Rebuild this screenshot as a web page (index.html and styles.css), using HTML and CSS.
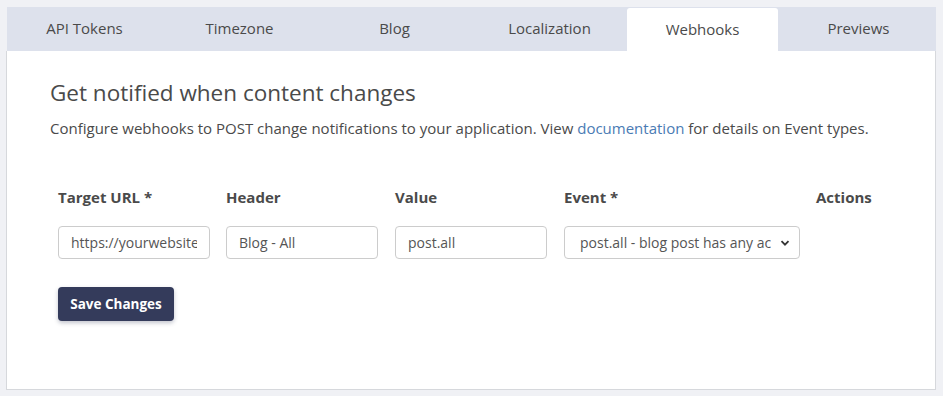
FILE: index.html
```html
<!DOCTYPE html>
<html lang="en">

<head>
    <meta charset="UTF-8">
    <meta name="viewport" content="width=device-width, initial-scale=1.0">
    <title>Settings - Webhooks</title>
    <link rel="stylesheet" href="styles.css">
</head>

<body>
    <div class="settings">
        <nav class="tabs">
            <a class="tab" href="#">API Tokens</a>
            <a class="tab" href="#">Timezone</a>
            <a class="tab" href="#">Blog</a>
            <a class="tab" href="#">Localization</a>
            <a class="tab active" href="#">Webhooks</a>
            <a class="tab" href="#">Previews</a>
        </nav>

        <div class="panel">
            <h2>Get notified when content changes</h2>
            <p class="intro">Configure webhooks to POST change notifications to your application. View <a href="#">documentation</a> for details on Event types.</p>

            <form id="webhookForm">
                <table class="hooks">
                    <thead>
                        <tr>
                            <th class="col-url">Target URL *</th>
                            <th class="col-header">Header</th>
                            <th class="col-value">Value</th>
                            <th class="col-event">Event *</th>
                            <th>Actions</th>
                        </tr>
                    </thead>
                    <tbody>
                        <tr>
                            <td><input type="text" name="url" value="https://yourwebsite.com/webhook"></td>
                            <td><input type="text" name="header" value="Blog - All"></td>
                            <td><input type="text" name="value" value="post.all"></td>
                            <td>
                                <div class="select-wrap">
                                    <select name="event">
                                        <option>post.all - blog post has any action</option>
                                    </select>
                                    <svg class="chevron" width="10" height="10" viewBox="0 0 10 10"><path d="M1.5 3.2 5 6.7 8.5 3.2" fill="none" stroke="#333" stroke-width="1.8"/></svg>
                                </div>
                            </td>
                            <td></td>
                        </tr>
                    </tbody>
                </table>

                <button type="submit" class="save-button">Save Changes</button>
            </form>
        </div>
    </div>
</body>

</html>
```

FILE: styles.css
```css
body {
    font-family: "Open Sans", sans-serif;
    background-color: #f0f1f5;
    color: #4a4a4a;
    margin: 0;
    padding: 7px 7px 6px 6px;
}

.tabs {
    display: flex;
    background-color: #dde1ec;
    margin-left: 1px;
    height: 44px;
}

.tab {
    flex: 1;
    display: flex;
    align-items: center;
    justify-content: center;
    padding-bottom: 2px;
    color: #4a4a4a;
    text-decoration: none;
    font-size: 15px;
    border-radius: 3px 3px 0 0;
}

.tab.active {
    background-color: #fff;
    flex: 0 0 151px;
    margin: 1px 3px 0 0;
}

.panel {
    background-color: #fff;
    border: 1px solid #d6d8dc;
    border-top: none;
    height: 338px;
    padding: 0 0 0 43px;
}

h2 {
    margin: 0;
    padding-top: 27px;
    font-size: 22.5px;
    font-weight: 400;
    color: #4a4a4a;
    line-height: 30px;
}

.intro {
    margin: 10px 0 0;
    font-size: 15px;
    line-height: 20px;
}

.intro a {
    color: #4a7bb4;
    text-decoration: none;
}

.hooks {
    border-collapse: collapse;
    margin-top: 49px;
}

.hooks th {
    text-align: left;
    font-size: 15px;
    font-weight: 700;
    padding: 0 8px 19px;
    color: #4a4a4a;
    line-height: 20px;
}

.hooks td {
    padding: 0 8px;
    vertical-align: top;
}

.col-url {
    width: 152px;
}

.col-header,
.col-value {
    width: 153px;
}

.col-event {
    width: 236px;
}

input[type="text"] {
    width: 152px;
    height: 33px;
    box-sizing: border-box;
    padding: 0 12px;
    border: 1px solid #ccc;
    border-radius: 4px;
    font-family: inherit;
    font-size: 14px;
    color: #555;
}

.col-header input,
.col-value input {
    width: 153px;
}

.select-wrap {
    position: relative;
    width: 236px;
}

select {
    width: 100%;
    height: 33px;
    appearance: none;
    background-color: #fff;
    border: 1px solid #ccc;
    border-radius: 4px;
    padding: 0 28px 0 15px;
    font-family: inherit;
    font-size: 14px;
    color: #555;
}

.chevron {
    position: absolute;
    right: 10px;
    top: 12px;
    pointer-events: none;
}

.save-button {
    margin: 28px 0 0 8px;
    background-color: #343b5b;
    color: #fff;
    border: none;
    border-radius: 4px;
    padding: 0;
    width: 116px;
    height: 34px;
    font-family: inherit;
    font-size: 13.5px;
    font-weight: 700;
    box-shadow: 0 2px 4px rgba(52, 59, 91, 0.3);
    cursor: pointer;
}
```
